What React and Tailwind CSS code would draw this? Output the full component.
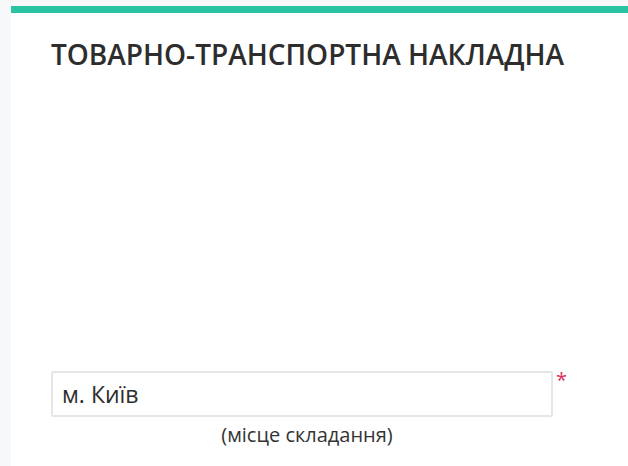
import React from 'react';

const App = () => {
  return (
    <div className="min-h-[466px] bg-[#f7f8fa] pl-[11px] pt-[6px]" style={{ fontFamily: '"Open Sans", sans-serif' }}>
      <div className="bg-white min-h-[460px] border-t-[7px] border-[#2bc4a3]">
        <div className="px-[40px] pt-[27px]">
          <h1 className="text-[28px] font-semibold text-[#2d2d2d] leading-none">
            ТОВАРНО-ТРАНСПОРТНА НАКЛАДНА
          </h1>
          <div className="mt-[303px] w-[512px] flex flex-col items-center">
            <div className="w-full flex items-start">
              <input
                type="text"
                defaultValue="м. Київ"
                className="w-[502px] shrink-0 h-[46px] border-2 border-[#e6e6e6] rounded-[2px] px-[9px] text-[23px] text-[#2d2d2d] outline-none"
              />
              <span className="ml-[3px] mt-[-1px] text-[#dc2f5a] text-[20px] leading-none">*</span>
            </div>
            <span className="mt-[4px] text-[20px] leading-[28px] text-[#333]">(місце складання)</span>
          </div>
        </div>
      </div>
    </div>
  );
};

export default App;
